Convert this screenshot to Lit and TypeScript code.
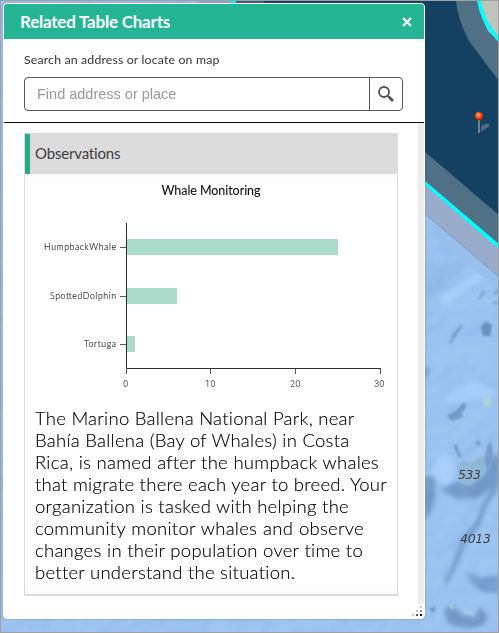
import { LitElement, html, css, svg } from "lit";
import { customElement } from "lit/decorators.js";
import { styleMap } from "lit/directives/style-map.js";

const LINES: [string, number][] = [
  ["The Marino Ballena National Park, near", 317],
  ["Bahía Ballena (Bay of Whales) in Costa", 312],
  ["Rica, is named after the humpback whales", 344],
  ["that migrate there each year to breed. Your", 352],
  ["organization is tasked with helping the", 314],
  ["community monitor whales and observe", 329],
  ["changes in their population over time to", 328],
  ["better understand the situation.", 257],
];

const BARS = [
  { name: "HumpbackWhale", len: 211, y: 239, x: 44, w: 72 },
  { name: "SpottedDolphin", len: 50, y: 288, x: 50, w: 66 },
  { name: "Tortuga", len: 8, y: 336, x: 84, w: 32 },
];

@customElement("sea-map")
class SeaMap extends LitElement {
  static styles = css`
    :host { display: block; width: 497px; height: 631px; }
    svg { display: block; }
    .relief { mix-blend-mode: soft-light; }
    .depth { font: italic 12.5px "DejaVu Sans", sans-serif; fill: #3c4048; }
  `;
  render() {
    return html`<svg width="497" height="631" viewBox="1 1 497 631">
      <defs>
        <filter id="soft" x="-30%" y="-30%" width="160%" height="160%"><feGaussianBlur stdDeviation="2" /></filter>
        <filter id="fine" x="-30%" y="-30%" width="160%" height="160%"><feGaussianBlur stdDeviation="0.9" /></filter>
        <filter id="relief" x="0" y="0" width="100%" height="100%" color-interpolation-filters="sRGB">
          <feTurbulence type="fractalNoise" baseFrequency="0.022 0.028" numOctaves="3" seed="8" />
          <feColorMatrix type="matrix" values="0 0 0 0 0  0 0 0 0 0  0 0 0 0 0  1 0 0 0 0" />
          <feDiffuseLighting surfaceScale="7" lighting-color="#ffffff"><feDistantLight azimuth="225" elevation="45" /></feDiffuseLighting>
        </filter>
        <radialGradient id="pin" cx="45%" cy="40%"><stop offset="0" stop-color="#ffd0a0" /><stop offset=".4" stop-color="#ff7030" /><stop offset="1" stop-color="#c62200" /></radialGradient>
      </defs>
      <rect width="499" height="633" fill="#98c0ef" />
      <g filter="url(#soft)">
        <path d="M424 262H470L430 300L424 330Z" fill="#90b8e8" />
        <path d="M432 470Q445 440 452 461Q460 480 445 486Z M438 300Q460 280 489 266L497 272Q472 285 444 306Z M440 402L475 380L496 392L484 396L462 402Z M450 478Q430 480 432 472Z" fill="#a4ccf9" />
        <path d="M424 477L433 475L436 486L432 510L424 522Z" fill="#6f96c7" />
        <path d="M440 489L457 482L470 485L485 474L491 460L499 450V486L490 490L478 498L456 499L446 493Z" fill="#7096c5" />
        <path d="M424 366L429 369L427 376L424 378Z" fill="#6e94c4" />
        <path d="M496 488L486 502L478 523L462 545L455 565L445 583" fill="none" stroke="#7299c9" stroke-width="5" />
        <path d="M466 572L480 577L499 576V593L484 592L472 584Z" fill="#769dce" />
        <path d="M444 610Q452 600 462 615L475 617L480 606Q492 618 483 625Q465 632 447 622Z" fill="#7095c4" />
      </g>
      <g filter="url(#fine)">
        <path d="M446 416L455 412L464 402L466 407L461 414L464 417L452 421Z" fill="#7096c4" />
        <path d="M481 327L485 321L492 325L490 336L483 336Z" fill="#688ebd" />
        <path d="M479 299L484 291M494 294L498 290M493 302L498 304M487 322L483 325M452 337L462 325L450 343" fill="none" stroke="#7398c6" stroke-width="2" />
        <path d="M455 445L460 457M477 441L479 445" stroke="#6f95c4" stroke-width="3" />
        <path d="M484 460L487 447L491 440L494 459L487 470Z" fill="#749ac9" />
        <path d="M458 465L463 461L470 464L475 460L484 455L484 472L469 485L459 480Z" fill="#8fb5d3" />
        <path d="M483 398L490 397L493 403L488 407L483 405Z" fill="#a8cfdc" />
        <path d="M429 608L436 607L433 613Z" fill="#6b90c0" />
        <path d="M450 604L453 609M463 611L474 614" stroke="#a4cbdc" stroke-width="3" />
      </g>
      <rect class="relief" width="499" height="633" filter="url(#relief)" opacity=".2" />
      <path d="M199 0H499V290L424 213Z" fill="#144062" />
      <path d="M225 0H264V5H244Z" fill="#3d6180" />
      <path d="M424 151L499 215V250L424 182Z" fill="#4f7085" />
      <path d="M424 182L499 246V277L424 213Z" fill="#9aaccb" />
      <path d="M424 213L499 277V290L424 230Z" fill="#99c0ed" />
      <path d="M424 180L499 244V249L424 184Z" fill="#00ffff" />
      <path d="M456 0H499V81L469 41Q457 18 456 0Z" fill="#4f7085" />
      <path d="M479 0H499V41L488 31Q479 11 479 0Z" fill="#bfc5bd" />
      <path d="M479 0Q482 18 491 30L499 40" fill="none" stroke="#00ffff" stroke-width="4" />
      <rect x="199" y="0" width="31" height="3" fill="#8fa9d2" />
      <rect x="230" y="1" width="6" height="2" fill="#00ffff" />
      <path d="M481 129V127Q484 123 489 124Q491 126 487 128L481 132Z" fill="#4d6c82" />
      <rect x="478" y="118" width="2" height="15" fill="#737f8e" />
      <circle cx="479" cy="116" r="4.2" fill="url(#pin)" />
      <text class="depth" x="458" y="479" textLength="23">533</text>
      <text class="depth" x="460" y="543" textLength="31">4013</text>
    </svg>`;
  }
}

@customElement("whale-chart")
class WhaleChart extends LitElement {
  static styles = css`
    :host { display: block; height: 226px; }
    svg { display: block; }
    text { font-family: Lato, sans-serif; }
    .title { font-size: 12.5px; fill: #111; stroke: #111; stroke-width: .1px; }
    .label { font: 300 8.7px Lato, sans-serif; fill: #111; stroke: #333; stroke-width: .15px; }
    .num { font: 8.5px Inter, sans-serif; fill: #555; }
    .axis { stroke: #2f2f2f; fill: none; }
    .tick { stroke: #555; fill: none; }
    .bar { fill: #abdccb; }
  `;
  render() {
    return html`<svg width="372" height="226" viewBox="25 174 372 226">
      <rect x="25" y="174" width="372" height="10" fill="#fcfcfc" />
      <text class="title" x="161.5" y="195" textLength="99">Whale Monitoring</text>
      ${BARS.map((b) => svg`
        <rect class="bar" x="127" y=${b.y} width=${b.len} height="16" />
        <path class="tick" d="M120 ${b.y + 8.5}H126" />
        <text class="label" x=${b.x} y=${b.y + 11} textLength=${b.w}>${b.name}</text>`)}
      <path class="axis" d="M126.5 223V368.5H380" />
      <path class="tick" d="M126.5 369V374M210.5 369V374M295.5 369V374M380.5 368V374" />
      <text class="num" x="123" y="387" textLength="5">0</text>
      <text class="num" x="205.5" y="387" textLength="10">10</text>
      <text class="num" x="290" y="387" textLength="10.5">20</text>
      <text class="num" x="374" y="387" textLength="10.5">30</text>
    </svg>`;
  }
}

@customElement("app-root")
class AppRoot extends LitElement {
  static styles = css`
    :host { display: block; position: relative; box-sizing: border-box; width: 499px; height: 633px; border: 1px solid #a0a0a0; overflow: hidden; font-family: Lato, sans-serif; }
    * { box-sizing: border-box; }
    .panel { position: absolute; left: 2px; top: 2px; width: 422px; height: 616px; border: 1px solid #fff; border-radius: 4px; background: #fff; display: flex; flex-direction: column; overflow: hidden; box-shadow: 0 0 2px rgba(63, 87, 117, .5); }
    .head { height: 35px; flex: none; background: #24b694; color: #fff; display: flex; align-items: center; justify-content: space-between; padding: 0 12px 0 16px; }
    .title { font-size: 17px; font-weight: 700; line-height: 20px; letter-spacing: -.22px; }
    .search { height: 84px; flex: none; padding: 12px 20px 0; border-bottom: 1px solid #111; }
    .hint { font-size: 12.3px; line-height: 18px; color: #333; letter-spacing: .16px; white-space: nowrap; }
    .box { display: flex; width: 379px; height: 34px; margin-top: 8px; border: 1px solid #555; border-radius: 4px; }
    .field { flex: 1; padding-left: 12px; font: 14.5px/32px "Liberation Sans", sans-serif; color: #999; }
    .go { width: 33px; border-left: 1px solid #555; display: grid; place-items: center; }
    .body { flex: 1; display: flex; justify-content: space-between; }
    .card { width: 374px; height: 463px; margin: 10px 0 0 20px; border: 1px solid #dcdcdc; border-bottom-width: 2px; display: flex; flex-direction: column; }
    .cardhead { height: 40px; flex: none; background: #dcdcdc; border-left: 5px solid #29aa88; padding-left: 5px; font-size: 15px; line-height: 38px; color: #3c3c3c; }
    .cardtitle { letter-spacing: -.18px; }
    .text { padding: 7px 0 0 10px; height: 184px; color: #000; font-size: 18.5px; font-weight: 300; line-height: 22px; flex: none; -webkit-text-stroke: .15px #000; }
    .line { display: block; text-align-last: justify; white-space: nowrap; letter-spacing: .25px; }
    .foot { flex: 1; background: #fbfbfb; }
    .track { width: 6px; height: 481px; background: #ececec; }
    .grip { position: absolute; right: 1px; bottom: 1px; }
  `;
  render() {
    return html`<sea-map></sea-map>
      <section class="panel">
        <header class="head"><span class="title">Related Table Charts</span>
          <svg width="10" height="10" viewBox="0 0 10 10"><path d="M1 1L9 9M9 1L1 9" stroke="#fff" stroke-width="2.2" /></svg>
        </header>
        <div class="search">
          <div class="hint">Search an address or locate on map</div>
          <div class="box"><div class="field">Find address or place</div>
            <div class="go"><svg width="18" height="18" viewBox="0 0 18 18" fill="none" stroke="#505050"><circle cx="7" cy="7" r="5" stroke-width="1.8" /><path d="M10.5 10.5L12 12" stroke-width="1.6" /><path d="M11.6 11.6L16 16" stroke-width="2.7" /></svg></div>
          </div>
        </div>
        <div class="body">
          <article class="card">
            <div class="cardhead"><span class="cardtitle">Observations</span></div>
            <whale-chart></whale-chart>
            <div class="text">${LINES.map(([t, w]) => html`<span class="line" style=${styleMap({ width: w + "px" })}>${t}</span>`)}</div>
            <div class="foot"></div>
          </article>
          <div class="track"></div>
        </div>
        <svg class="grip" width="12" height="12"><g fill="#c0c0c0"><rect x="9" y="1" width="2" height="2" /><rect x="5" y="5" width="2" height="2" /><rect x="1" y="9" width="2" height="2" /></g><rect x="9" y="5" width="2" height="2" fill="#888" /><rect x="5" y="9" width="2" height="2" fill="#555" /><rect x="9" y="9" width="2" height="2" fill="#000" /></svg>
      </section>`;
  }
}
